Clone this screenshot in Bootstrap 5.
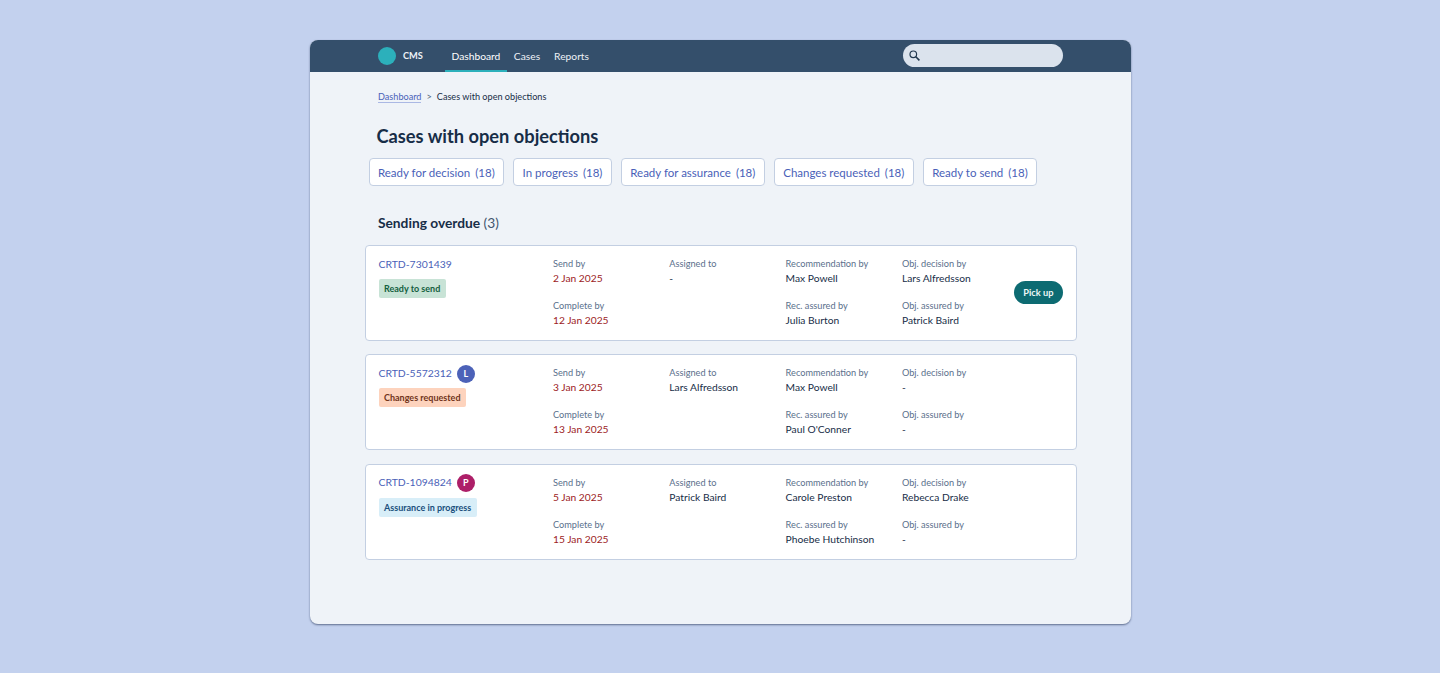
<!DOCTYPE html>
<html lang="en">
<head>
<meta charset="utf-8">
<title>CMS</title>
<link rel="stylesheet" href="https://cdn.jsdelivr.net/npm/bootstrap@5.3.0/dist/css/bootstrap.min.css">
<style>
html,body{height:673px;overflow:hidden}
body{background:#c3d1ee;font-family:"Lato",sans-serif;color:#172d47;padding-top:40px}
.app-win{width:821px;height:584px;margin-left:310px;background:#eff3f8;border-radius:8px;box-shadow:0 1px 2px rgba(40,55,90,.65);overflow:hidden}
.app-bar{height:32px;background:#344f6b;padding:0 68px;align-items:stretch;flex-wrap:nowrap;justify-content:flex-start}
.logo-dot{width:18px;height:18px;border-radius:50%;background:#2cb0bb;margin-right:7px}
.logo-txt{font-size:9.25px;font-weight:700;color:#eef2f7;width:42px}
.app-nav{gap:0;flex-direction:row}
.app-nav .nav-link{color:#eef2f7;font-size:10.25px;padding:0 7px;height:32px;line-height:32px;border-radius:0}
.app-nav .nav-link.active{color:#fff;box-shadow:inset 0 -2px 0 #2cb0bb;border-radius:3px 3px 0 0;padding:0 6.5px}
.app-search{width:160px;height:23px;background:#dbe3ed;border-radius:12px;margin:4px 0 0 auto;padding-left:5px}
.crumbs{font-size:9.15px;margin:0;padding:18px 0 0 68px;height:52px;--bs-breadcrumb-margin-bottom:0;--bs-breadcrumb-divider:">"}
.crumbs a{color:#4a62b8;text-decoration:none;border-bottom:1px solid #aab8e4}
.crumbs .breadcrumb-item{line-height:13px;color:#172d47}
.crumbs .breadcrumb-item.active{color:#172d47}
.crumbs .breadcrumb-item+.breadcrumb-item{padding-left:5px}
.crumbs .breadcrumb-item+.breadcrumb-item::before{color:#4f6078;padding-right:5px}
.page-h{font-size:18.25px;font-weight:700;line-height:24px;margin:0 0 10px 66.5px;color:#172d47}
.tabs-row{gap:9px;margin-left:58.5px}
.tab-btn{height:28px;background:#fff;border:1px solid #c3cfe2;border-radius:4px;font-size:11.5px;color:#4a5fb8;padding:0 8.45px;line-height:27px;white-space:nowrap;--bs-btn-hover-bg:#fff;--bs-btn-hover-color:#4a5fb8}
.tab-btn span{margin-left:2px}
.sec-h{font-size:13.75px;font-weight:700;line-height:18px;margin:28px 0 13px 68px;color:#172d47}
.sec-h span{font-weight:400;color:#41566f}
.case-list{margin-left:55px;width:712px;gap:13.33px}
.case-card{height:96px;border:1px solid #c3cfe2;border-radius:4px;--bs-card-bg:#fff}
.case-grid{display:grid;grid-template-columns:174.5px repeat(4,116.3px) 1fr;padding:11px 13px 0 12.5px;height:100%}
.id-line{display:flex;align-items:center;height:14px;gap:5px;margin:.5px 0 2.5px}
.id-line a{font-size:10.4px;color:#4a5fb8;text-decoration:none}
.ava{width:18px;height:18px;border-radius:50%;color:#fff;font-size:9px;font-weight:700;display:flex;align-items:center;justify-content:center}
.ava-l{background:#4c62b8}
.ava-p{background:#ad1f68}
.stat{font-size:9px;font-weight:700;line-height:13px;padding:3px 5.5px;border-radius:2px;display:inline-block}
.st-g{background:#c8e3d6;color:#14603f}
.st-o{background:#fdd3bd;color:#70341a}
.st-b{background:#d8eef8;color:#1a4f7c}
.fld{height:42px}
.fld-lab{display:block;font-size:9.2px;line-height:14px;color:#5a708c}
.fld-val{font-size:10.25px;line-height:14px;color:#172d47}
.fld-val.late{color:#9c1c24}
.act-cell{display:flex;align-items:center;justify-content:flex-end;padding-bottom:14px;min-width:0}
.pick{flex:none;height:23px;border-radius:12px;background:#0d6b72;color:#eef7f7;font-size:9.25px;font-weight:700;padding:0 9.5px;border:0;line-height:23px;white-space:nowrap;--bs-btn-hover-bg:#0d6b72;--bs-btn-hover-color:#eef7f7}
</style>
</head>
<body>
<div class="app-win">
  <nav class="navbar app-bar d-flex">
    <div class="d-flex align-items-center">
      <span class="logo-dot"></span><span class="logo-txt">CMS</span>
    </div>
    <ul class="nav app-nav">
      <li class="nav-item"><a class="nav-link active" href="#">Dashboard</a></li>
      <li class="nav-item"><a class="nav-link" href="#">Cases</a></li>
      <li class="nav-item"><a class="nav-link" href="#">Reports</a></li>
    </ul>
    <div class="app-search d-flex align-items-center">
      <svg width="13" height="13" viewBox="0 0 13 13" fill="none" stroke="#22384f" stroke-width="1.2"><circle cx="5.3" cy="5.3" r="3.3"/><path d="M7.8 7.8 11.4 11.4" stroke-width="1.6"/></svg>
    </div>
  </nav>

  <ol class="breadcrumb crumbs">
    <li class="breadcrumb-item"><a href="#">Dashboard</a></li>
    <li class="breadcrumb-item active">Cases with open objections</li>
  </ol>

  <h1 class="page-h">Cases with open objections</h1>

  <div class="d-flex tabs-row">
    <button class="btn tab-btn">Ready for decision <span>(18)</span></button>
    <button class="btn tab-btn">In progress <span>(18)</span></button>
    <button class="btn tab-btn">Ready for assurance <span>(18)</span></button>
    <button class="btn tab-btn">Changes requested <span>(18)</span></button>
    <button class="btn tab-btn">Ready to send <span>(18)</span></button>
  </div>

  <h2 class="sec-h">Sending overdue <span>(3)</span></h2>

  <div class="d-flex flex-column case-list">
    <div class="card case-card"><div class="case-grid">
      <div><div class="id-line"><a href="#">CRTD-7301439</a></div><span class="stat st-g">Ready to send</span></div>
      <div><div class="fld"><span class="fld-lab">Send by</span><div class="fld-val late">2 Jan 2025</div></div><div class="fld"><span class="fld-lab">Complete by</span><div class="fld-val late">12 Jan 2025</div></div></div>
      <div><div class="fld"><span class="fld-lab">Assigned to</span><div class="fld-val">-</div></div></div>
      <div><div class="fld"><span class="fld-lab">Recommendation by</span><div class="fld-val">Max Powell</div></div><div class="fld"><span class="fld-lab">Rec. assured by</span><div class="fld-val">Julia Burton</div></div></div>
      <div><div class="fld"><span class="fld-lab">Obj. decision by</span><div class="fld-val">Lars Alfredsson</div></div><div class="fld"><span class="fld-lab">Obj. assured by</span><div class="fld-val">Patrick Baird</div></div></div>
      <div class="act-cell"><button class="btn pick">Pick up</button></div>
    </div></div>

    <div class="card case-card"><div class="case-grid">
      <div><div class="id-line"><a href="#">CRTD-5572312</a><span class="ava ava-l">L</span></div><span class="stat st-o">Changes requested</span></div>
      <div><div class="fld"><span class="fld-lab">Send by</span><div class="fld-val late">3 Jan 2025</div></div><div class="fld"><span class="fld-lab">Complete by</span><div class="fld-val late">13 Jan 2025</div></div></div>
      <div><div class="fld"><span class="fld-lab">Assigned to</span><div class="fld-val">Lars Alfredsson</div></div></div>
      <div><div class="fld"><span class="fld-lab">Recommendation by</span><div class="fld-val">Max Powell</div></div><div class="fld"><span class="fld-lab">Rec. assured by</span><div class="fld-val">Paul O'Conner</div></div></div>
      <div><div class="fld"><span class="fld-lab">Obj. decision by</span><div class="fld-val">-</div></div><div class="fld"><span class="fld-lab">Obj. assured by</span><div class="fld-val">-</div></div></div>
      <div></div>
    </div></div>

    <div class="card case-card"><div class="case-grid">
      <div><div class="id-line"><a href="#">CRTD-1094824</a><span class="ava ava-p">P</span></div><span class="stat st-b">Assurance in progress</span></div>
      <div><div class="fld"><span class="fld-lab">Send by</span><div class="fld-val late">5 Jan 2025</div></div><div class="fld"><span class="fld-lab">Complete by</span><div class="fld-val late">15 Jan 2025</div></div></div>
      <div><div class="fld"><span class="fld-lab">Assigned to</span><div class="fld-val">Patrick Baird</div></div></div>
      <div><div class="fld"><span class="fld-lab">Recommendation by</span><div class="fld-val">Carole Preston</div></div><div class="fld"><span class="fld-lab">Rec. assured by</span><div class="fld-val">Phoebe Hutchinson</div></div></div>
      <div><div class="fld"><span class="fld-lab">Obj. decision by</span><div class="fld-val">Rebecca Drake</div></div><div class="fld"><span class="fld-lab">Obj. assured by</span><div class="fld-val">-</div></div></div>
      <div></div>
    </div></div>
  </div>
</div>
<script src="https://cdn.jsdelivr.net/npm/bootstrap@5.3.0/dist/js/bootstrap.bundle.min.js"></script>
</body>
</html>
